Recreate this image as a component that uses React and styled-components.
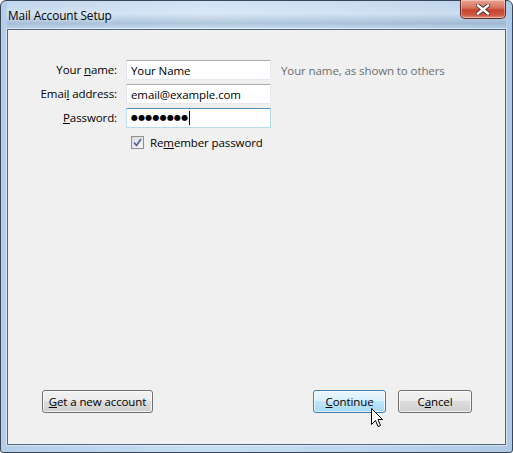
import styled, { createGlobalStyle } from "styled-components";

const GlobalStyle = createGlobalStyle`
  html, body {
    margin: 0;
    padding: 0;
    width: 513px;
    height: 453px;
    overflow: hidden;
    background: #ffffff;
  }
  * { box-sizing: border-box; }
`;

const Window = styled.div`
  position: relative;
  width: 513px;
  height: 453px;
  display: flex;
  flex-direction: column;
  border: 1px solid #3a4656;
  border-radius: 6px 6px 3px 3px;
  padding: 0 6px 7px 6px;
  background: linear-gradient(to right, #b4cee9 0%, #c8def3 40%, #bed6ee 70%, #aec9e6 100%);
  font-family: "Open Sans", "Noto Sans", sans-serif;
  font-size: 11.5px;
  letter-spacing: -0.1px;
  color: #000;
`;

const TitleBar = styled.div`
  height: 28px;
  display: flex;
  justify-content: space-between;
  align-items: flex-start;
  padding-left: 1px;
  background: linear-gradient(to bottom, rgba(255,255,255,0.15) 0%, rgba(255,255,255,0.3) 45%, rgba(110,130,150,0.25) 80%, rgba(255,255,255,0.1) 100%);
`;

const Title = styled.div`
  margin-top: 6px;
  font-size: 11.8px;
  color: #000;
  text-shadow: 0 0 6px rgba(255,255,255,0.9);
`;

const CloseButton = styled.div`
  width: 46px;
  height: 19px;
  margin-top: -1px;
  display: flex;
  align-items: center;
  justify-content: center;
  border: 1px solid #5a2a26;
  border-top: none;
  border-radius: 0 0 5px 5px;
  background: linear-gradient(to bottom, #e8a493 0%, #d6705c 45%, #c5432d 55%, #cf5a43 85%, #e49684 100%);
  box-shadow: inset 0 0 0 1px rgba(255,255,255,0.35);
`;

const Client = styled.div`
  flex: 1;
  display: flex;
  flex-direction: column;
  justify-content: space-between;
  border: 1px solid #52667c;
  background: #f0f0f0;
  box-shadow: 0 0 0 1px rgba(255,255,255,0.45);
`;

const Form = styled.div`
  display: grid;
  grid-template-columns: 109px 145px 1fr;
  grid-auto-rows: 20px;
  column-gap: 9px;
  row-gap: 4px;
  padding-top: 30px;
  align-items: center;
`;

const Label = styled.label`
  text-align: right;
  white-space: nowrap;
  line-height: 20px;
`;

const Input = styled.div`
  height: 20px;
  padding: 0 4px;
  display: flex;
  align-items: center;
  background: #fff;
  border: 1px solid ${(p) => (p.$focused ? "#b7d9ed" : "#e3e9ef")};
  border-top-color: ${(p) => (p.$focused ? "#5794bf" : "#abadb3")};
  border-left-color: ${(p) => (p.$focused ? "#c3e1f5" : "#e2e3ea")};
  white-space: nowrap;
  overflow: hidden;
`;

const Dots = styled.span`
  font-family: "DejaVu Sans", sans-serif;
  font-size: 8px;
  letter-spacing: 0.2px;
  line-height: 1;
`;

const Caret = styled.span`
  display: inline-block;
  width: 1px;
  height: 14px;
  background: #000;
  margin-left: 1px;
`;

const Hint = styled.span`
  color: #6d6d6d;
  padding-left: 1px;
  white-space: nowrap;
`;

const CheckRow = styled.div`
  grid-column: 2 / 4;
  display: flex;
  align-items: center;
  gap: 6px;
  padding-left: 5px;
`;

const Checkbox = styled.span`
  width: 13px;
  height: 13px;
  border: 1px solid #8e8f8f;
  background: linear-gradient(135deg, #dcdcdc 0%, #f6f6f6 100%);
  display: flex;
  align-items: center;
  justify-content: center;
`;

const ButtonRow = styled.div`
  display: flex;
  align-items: center;
  padding: 0 33px 31px 34px;
  gap: 12px;
`;

const Spacer = styled.div`
  flex: 1;
`;

const Button = styled.button`
  position: relative;
  height: 23px;
  width: ${(p) => p.$width}px;
  padding: 0;
  font-family: inherit;
  font-size: 11.5px;
  letter-spacing: -0.1px;
  color: #000;
  border: 1px solid ${(p) => (p.$hover ? "#3c7fb1" : "#707070")};
  border-radius: 3px;
  background: ${(p) =>
    p.$hover
      ? "linear-gradient(to bottom, #eaf6fd 0%, #d9f0fc 50%, #bee6fd 50%, #a7d9f5 100%)"
      : "linear-gradient(to bottom, #f2f2f2 0%, #ebebeb 50%, #dddddd 50%, #cfcfcf 100%)"};
  box-shadow: inset 0 0 0 1px rgba(255,255,255,0.7);
`;

const Pointer = styled.svg`
  position: absolute;
  left: 57px;
  top: 17px;
  pointer-events: none;
`;

export default function App() {
  return (
    <>
      <GlobalStyle />
      <Window>
        <TitleBar>
          <Title>Mail Account Setup</Title>
          <CloseButton>
            <svg width="14" height="11" viewBox="0 0 14 11">
              <path d="M2 1.5 L12 9.5 M12 1.5 L2 9.5" stroke="#4a2a28" strokeWidth="4.2" strokeLinecap="square" />
              <path d="M2 1.5 L12 9.5 M12 1.5 L2 9.5" stroke="#ffffff" strokeWidth="2.4" strokeLinecap="square" />
            </svg>
          </CloseButton>
        </TitleBar>
        <Client>
          <Form>
            <Label>Your <u>n</u>ame:</Label>
            <Input>Your Name</Input>
            <Hint>Your name, as shown to others</Hint>

            <Label>Emai<u>l</u> address:</Label>
            <Input>email@example.com</Input>
            <span />

            <Label><u>P</u>assword:</Label>
            <Input $focused>
              <Dots>●●●●●●●●</Dots>
              <Caret />
            </Input>
            <span />

            <span />
            <CheckRow>
              <Checkbox>
                <svg width="9" height="9" viewBox="0 0 9 9">
                  <path d="M1 4.5 L3.5 7.5 L8 1" fill="none" stroke="#4a5f97" strokeWidth="1.6" />
                </svg>
              </Checkbox>
              <span>Re<u>m</u>ember password</span>
            </CheckRow>
          </Form>

          <ButtonRow>
            <Button $width={111}><u>G</u>et a new account</Button>
            <Spacer />
            <Button $width={73} $hover>
              <u>C</u>ontinue
              <Pointer width="12" height="20" viewBox="0 0 12 20">
                <path d="M0.5 0.5 L0.5 16.5 L4.5 12.5 L7 18.5 L9.5 17.5 L7 11.5 L11.5 11.5 Z" fill="#fff" stroke="#000" strokeWidth="1" strokeLinejoin="miter" />
              </Pointer>
            </Button>
            <Button $width={74}>C<u>a</u>ncel</Button>
          </ButtonRow>
        </Client>
      </Window>
    </>
  );
}
